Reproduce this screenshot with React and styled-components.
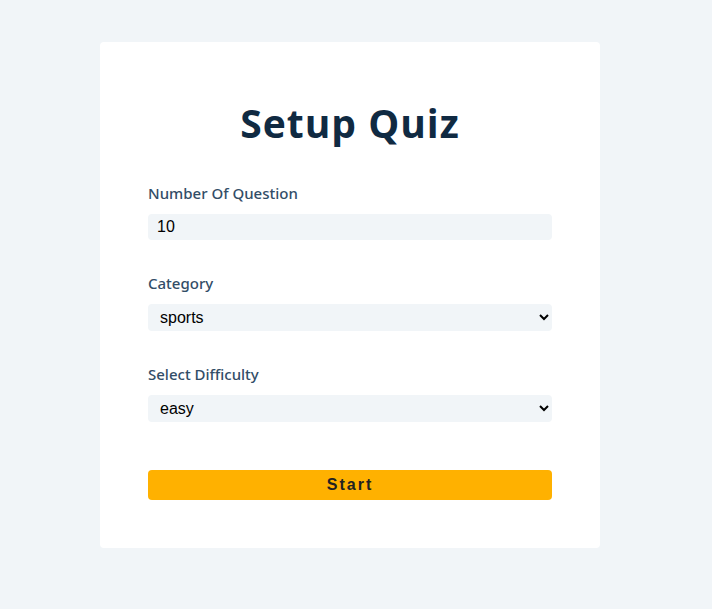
import React from "react";
import styled, { createGlobalStyle } from "styled-components";

const GlobalStyle = createGlobalStyle`
  body {
    margin: 0;
    background: #f1f5f8;
    font-family: "Open Sans", "Noto Sans", sans-serif;
  }
`;

const Page = styled.main`
  min-height: 609px;
  padding: 42px 0 0 100px;
  box-sizing: border-box;
`;

const Card = styled.section`
  width: 500px;
  box-sizing: border-box;
  background: #fff;
  border-radius: 4px;
  padding: 55px 48px 48px;
`;

const Title = styled.h2`
  margin: 0 0 34px;
  text-align: center;
  font-size: 39px;
  line-height: 52px;
  font-weight: 700;
  letter-spacing: 1px;
  color: #102a42;
`;

const Group = styled.div`
  display: flex;
  flex-direction: column;
  margin-bottom: ${(p) => p.gap || "33px"};
`;

const Label = styled.label`
  font-family: "Noto Sans", "Open Sans", sans-serif;
  font-size: 15px;
  line-height: 20px;
  font-weight: 500;
  color: #324d67;
  margin-bottom: 11px;
`;

const Field = styled.input`
  border: none;
  outline: none;
  background: #f1f5f8;
  border-radius: 4px;
  height: 26px;
  padding: 0 9px;
  font-family: "Liberation Sans", Arial, sans-serif;
  font-size: 16px;
  color: #000;
`;

const Select = styled.select`
  border: none;
  outline: none;
  background: #f1f5f8;
  border-radius: 4px;
  height: 27px;
  padding: 0 8px;
  font-family: "Liberation Sans", Arial, sans-serif;
  font-size: 16px;
  color: #000;
`;

const StartButton = styled.button`
  width: 100%;
  height: 30px;
  border: none;
  border-radius: 4px;
  background: #ffb100;
  color: #222;
  font-family: "Liberation Sans", Arial, sans-serif;
  font-size: 16px;
  font-weight: 700;
  letter-spacing: 2px;
  cursor: pointer;
`;

export default function App() {
  return (
    <>
      <GlobalStyle />
      <Page>
        <Card>
          <Title>Setup Quiz</Title>
          <Group>
            <Label htmlFor="amount">Number Of Question</Label>
            <Field id="amount" type="number" defaultValue={10} />
          </Group>
          <Group>
            <Label htmlFor="category">Category</Label>
            <Select id="category" defaultValue="sports">
              <option value="sports">sports</option>
              <option value="history">history</option>
              <option value="politics">politics</option>
            </Select>
          </Group>
          <Group gap="48px">
            <Label htmlFor="difficulty">Select Difficulty</Label>
            <Select id="difficulty" defaultValue="easy">
              <option value="easy">easy</option>
              <option value="medium">medium</option>
              <option value="hard">hard</option>
            </Select>
          </Group>
          <StartButton type="submit">Start</StartButton>
        </Card>
      </Page>
    </>
  );
}
